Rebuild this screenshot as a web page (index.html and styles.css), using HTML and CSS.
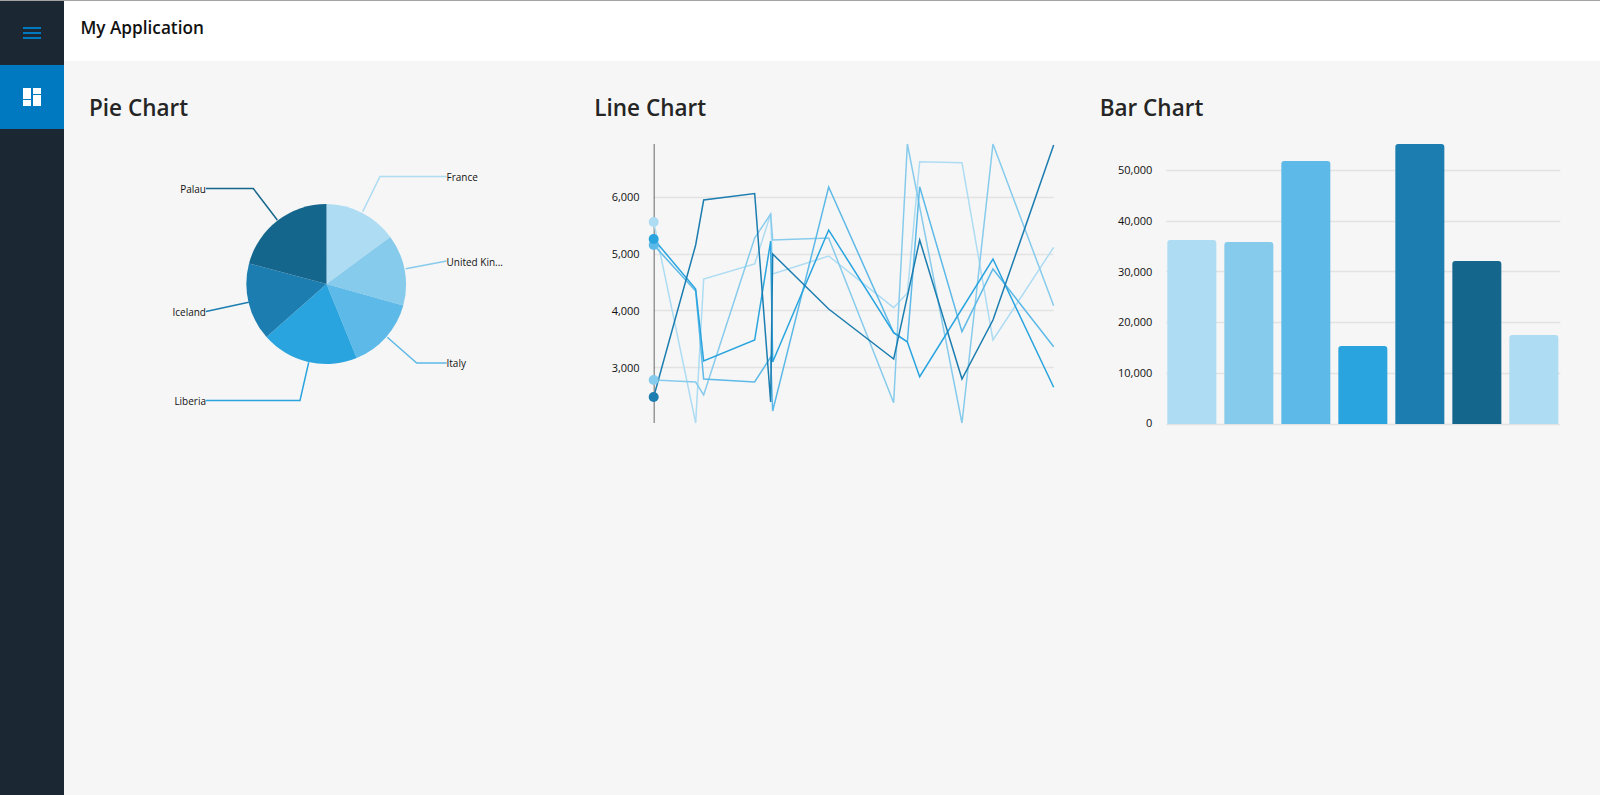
FILE: index.html
```html
<!DOCTYPE html>
<html lang="en">
<head>
<meta charset="utf-8">
<title>My Application</title>
<link rel="stylesheet" href="styles.css">
</head>
<body>
<div class="app">
  <nav class="rail">
    <button class="rail-btn" aria-label="Menu">
      <svg class="icon" viewBox="0 0 18 12"><path class="menu-bars" d="M0 1h18M0 6h18M0 11h18"/></svg>
    </button>
    <button class="rail-btn active" aria-label="Dashboard">
      <svg class="icon-dash" viewBox="0 0 18 18"><path d="M0 0h8v11H0zM0 12h8v6H0zM10 0h8v6h-8zM10 7h8v11h-8z"/></svg>
    </button>
  </nav>
  <div class="shell">
    <header class="topbar">My Application</header>
    <main class="board">
      <section class="panel">
        <h2 class="panel-title">Pie Chart</h2>
        <svg class="chart" viewBox="74 135 505.33 300">
          <path class="s1" d="M326.5 284V204A80 80 0 0 1 390.3 236.9Z"/>
          <path class="s2" d="M326.5 284L390.3 236.9A80 80 0 0 1 403.3 305.5Z"/>
          <path class="s3" d="M326.5 284L403.3 305.5A80 80 0 0 1 356.7 358Z"/>
          <path class="s4" d="M326.5 284L356.7 358A80 80 0 0 1 266.5 337Z"/>
          <path class="s5" d="M326.5 284L266.5 337A80 80 0 0 1 249 263.5Z"/>
          <path class="s6" d="M326.5 284L249 263.5A80 80 0 0 1 326.5 204Z"/>
          <polyline class="l1 leader" points="362.7,211.7 380,176.5 446.7,176.5"/>
          <polyline class="l2 leader" points="405.7,268.7 446.7,261"/>
          <polyline class="l3 leader" points="387.3,337.3 416.7,363 446.7,363"/>
          <polyline class="l4 leader" points="308.7,362.3 300,400.5 206,400.5"/>
          <polyline class="l5 leader" points="248.7,302.3 206,311.5"/>
          <polyline class="l6 leader" points="277.3,220 253.3,188.5 206,188.5"/>
          <text class="lab slim" x="446.5" y="181">France</text>
          <text class="lab slim" x="446.5" y="266">United Kin...</text>
          <text class="lab slim" x="446.5" y="367.5">Italy</text>
          <text class="lab slim end" x="206" y="405">Liberia</text>
          <text class="lab slim end" x="206" y="316">Iceland</text>
          <text class="lab slim end" x="206" y="193">Palau</text>
        </svg>
      </section>
      <section class="panel">
        <h2 class="panel-title">Line Chart</h2>
        <svg class="chart" viewBox="579.33 135 505.33 300">
          <path class="grid" d="M654 197.5H1054M654 254.5H1054M654 310.5H1054M654 367.5H1054"/>
          <path class="axis" d="M654.5 144V423"/>
          <text class="lab end" x="640" y="201.5">6,000</text>
          <text class="lab end" x="640" y="258.5">5,000</text>
          <text class="lab end" x="640" y="315">4,000</text>
          <text class="lab end" x="640" y="372">3,000</text>
          <polyline class="line l1" points="654,222 696,423 704,279 755,264 771,214 773,274 829,256 894,307.7 907.7,293 920,161.7 962.3,162.7 993.3,340 1054,247.3"/>
          <polyline class="line l2" points="654,380 696,382 704,395 755,238 771,214 773,240 829,238 894,402.7 907.7,144 962.3,423 993.3,144 1054,305.7"/>
          <polyline class="line l3" points="654,245 696,291 704,379 755,382 771,357 773,411 829,187 894,332.7 907.7,342 920,186.7 962.3,331.7 993.3,269 1054,346.7"/>
          <polyline class="line l4" points="654,239 696,289 704,361 755,340 771,241 773,362 829,230 894,332.7 907.7,342 920,376.7 993.3,259 1054,387.3"/>
          <polyline class="line l5" points="654,397 696,245 704,200 755,193.5 771,402 773,254 829,309 894,359 920,240 962.3,379 993.3,320 1054,145"/>
          <circle class="s1" cx="654" cy="222" r="5"/>
          <circle class="s2" cx="654" cy="380" r="5"/>
          <circle class="s3" cx="654" cy="245" r="5"/>
          <circle class="s4" cx="654" cy="239" r="5"/>
          <circle class="s5" cx="654" cy="397" r="5"/>
        </svg>
      </section>
      <section class="panel">
        <h2 class="panel-title">Bar Chart</h2>
        <svg class="chart" viewBox="1084.67 135 505.33 300">
          <path class="grid" d="M1166 170.5H1560M1166 221.5H1560M1166 271.5H1560M1166 322.5H1560M1166 373.5H1560M1166 424.5H1560"/>
          <text class="lab end" x="1152" y="174">50,000</text>
          <text class="lab end" x="1152" y="225">40,000</text>
          <text class="lab end" x="1152" y="276">30,000</text>
          <text class="lab end" x="1152" y="326">20,000</text>
          <text class="lab end" x="1152" y="377">10,000</text>
          <text class="lab end" x="1152" y="427">0</text>
          <path class="s1" d="M1167 424V243a3 3 0 0 1 3-3h43a3 3 0 0 1 3 3V424Z"/>
          <path class="s2" d="M1224 424V245a3 3 0 0 1 3-3h43a3 3 0 0 1 3 3V424Z"/>
          <path class="s3" d="M1281 424V164a3 3 0 0 1 3-3h43a3 3 0 0 1 3 3V424Z"/>
          <path class="s4" d="M1338 424V349a3 3 0 0 1 3-3h43a3 3 0 0 1 3 3V424Z"/>
          <path class="s5" d="M1395 424V147a3 3 0 0 1 3-3h43a3 3 0 0 1 3 3V424Z"/>
          <path class="s6" d="M1452 424V264a3 3 0 0 1 3-3h43a3 3 0 0 1 3 3V424Z"/>
          <path class="s1" d="M1509 424V338a3 3 0 0 1 3-3h43a3 3 0 0 1 3 3V424Z"/>
        </svg>
      </section>
    </main>
  </div>
</div>
</body>
</html>
```
FILE: styles.css
```css
* { box-sizing: border-box; }
html, body { margin: 0; height: 100%; }
body {
  font-family: "Open Sans", "Noto Sans", sans-serif;
  background: #f6f6f6;
  border-top: 1px solid #a3a3a3;
  overflow: hidden;
}
.app { display: flex; height: 100%; }
.rail { width: 64px; flex: none; background: #1b2733; display: flex; flex-direction: column; }
.rail-btn {
  width: 64px; height: 64px; padding: 0; border: 0; background: transparent;
  display: flex; align-items: center; justify-content: center;
}
.rail-btn.active { background: #0079c1; }
.icon { width: 18px; height: 12px; }
.menu-bars { fill: none; stroke: #0079c1; stroke-width: 2; }
.icon-dash { width: 18px; height: 18px; fill: #fff; }
.shell { flex: 1; min-width: 0; display: flex; flex-direction: column; }
.topbar {
  height: 60px; background: #fff; padding: 0 0 8px 16.5px;
  display: flex; align-items: center;
  font-size: 17.2px; font-weight: 600; color: #111;
}
.board { display: grid; grid-template-columns: repeat(3, 1fr); padding: 32px 10px 0; }
.panel { min-width: 0; }
.panel-title { margin: 0 0 12px 15px; font-size: 22.5px; line-height: 30px; font-weight: 600; color: #252525; }
.chart { display: block; width: 100%; height: 300px; }
.s1 { fill: #addcf3; } .s2 { fill: #87cbec; } .s3 { fill: #5db9e7; }
.s4 { fill: #29a4df; } .s5 { fill: #1c7db0; } .s6 { fill: #15668d; }
.leader, .line { fill: none; stroke-width: 1.5; }
.l1 { stroke: #addcf3; } .l2 { stroke: #87cbec; } .l3 { stroke: #5db9e7; }
.l4 { stroke: #29a4df; } .l5 { stroke: #1c7db0; } .l6 { stroke: #15668d; }
.grid { fill: none; stroke: #e3e3e3; stroke-width: 1.4; }
.axis { fill: none; stroke: #666; stroke-width: 1; }
.lab { font-size: 11px; fill: #111; }
.slim { font-size: 10px; }
.end { text-anchor: end; }
```
